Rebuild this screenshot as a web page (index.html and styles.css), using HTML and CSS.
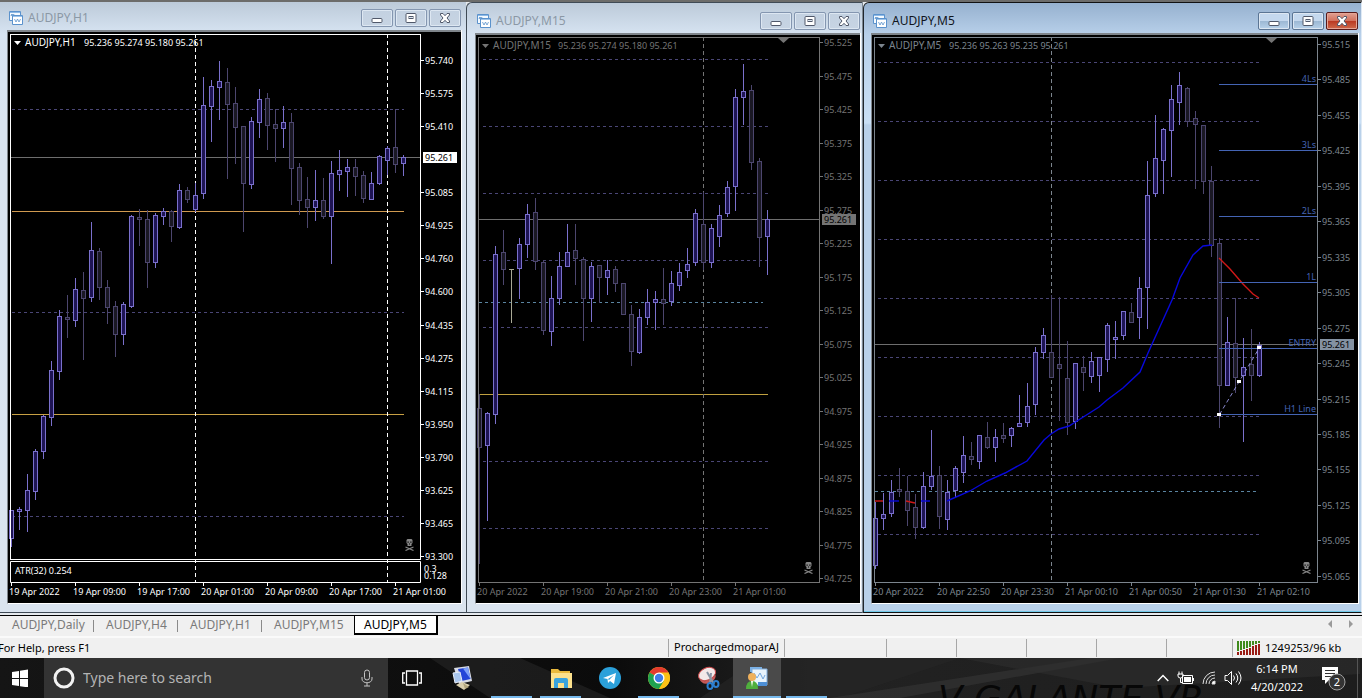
FILE: index.html
```html
<!DOCTYPE html>
<html lang="en">
<head>
<meta charset="utf-8">
<title>AUDJPY charts</title>
<link rel="stylesheet" href="styles.css">
</head>
<body>
<svg class="defs" width="0" height="0" aria-hidden="true">
  <symbol id="ico-chart" viewBox="0 0 14 14">
    <path d="M.5 .5h11v9H.5z" fill="#f4faff" stroke="#5b92cc"/>
    <path d="M1 1.500h10" stroke="#8db9e6"/>
    <path d="M2 5l1-2 1 2 1-2" fill="none" stroke="#5b92cc"/>
    <path d="M3.500 4.500h10v9h-10z" fill="#fff" stroke="#5b92cc"/>
    <path d="M4 5.500h9" stroke="#9cc3ea"/>
    <path d="M5.500 8l1.500 3L8.500 8 10 11 11.500 8" fill="none" stroke="#5b92cc" stroke-width=".8"/>
  </symbol>
  <symbol id="ico-min" viewBox="0 0 12 10"><rect x="1" y="5.500" width="10" height="4" rx="1" fill="#fff" stroke="#50586a"/></symbol>
  <symbol id="ico-max" viewBox="0 0 12 10"><rect x="1" y=".5" width="10" height="9" rx="1" fill="#fff" stroke="#50586a"/><rect x="4" y="3.500" width="4" height="2" fill="#dce6f0" stroke="#50586a"/></symbol>
  <symbol id="ico-close" viewBox="0 0 12 10"><path d="M1.500 .500h2.500l2 2.200 2-2.200h2.500v1.500L8 5l2.500 3v1.500H8L6 7.300 4 9.500H1.500V8L4 5 1.500 2z" fill="#fff" stroke="#50586a"/></symbol>
  <symbol id="ico-skull" viewBox="0 0 9 12"><path d="M2.500 0h4l1 1v3l-1 1v2h-4v-2l-1-1v-3z" fill="#868686"/><path d="M2.500 2.500h1.200v1.200H2.500zM5.300 2.500h1.200v1.200H5.300zM4 4.500h1v1H4z" fill="#000"/><path d="M.5 8l8 3.500M8.500 8l-8 3.500" stroke="#868686" stroke-width="1.200"/></symbol>
</svg>

<main class="workspace">
  <section class="window window-flat" aria-label="AUDJPY,H1">
    <header class="titlebar">
      <svg class="title-icon"><use href="#ico-chart"/></svg><h2>AUDJPY,H1</h2>
      <button aria-label="Minimize"><svg><use href="#ico-min"/></svg></button>
      <button aria-label="Maximize"><svg><use href="#ico-max"/></svg></button>
      <button aria-label="Close"><svg><use href="#ico-close"/></svg></button>
    </header>
    <svg class="chart" id="chart-h1" viewBox="8 32 453 571" preserveAspectRatio="xMinYMin meet"></svg>
  </section>
  <section class="window" aria-label="AUDJPY,M15">
    <header class="titlebar">
      <svg class="title-icon"><use href="#ico-chart"/></svg><h2>AUDJPY,M15</h2>
      <button aria-label="Minimize"><svg><use href="#ico-min"/></svg></button>
      <button aria-label="Maximize"><svg><use href="#ico-max"/></svg></button>
      <button aria-label="Close"><svg><use href="#ico-close"/></svg></button>
    </header>
    <svg class="chart" id="chart-m15" viewBox="476 35 384 568" preserveAspectRatio="xMinYMin meet"></svg>
  </section>
  <section class="window window-active" aria-label="AUDJPY,M5">
    <header class="titlebar">
      <svg class="title-icon"><use href="#ico-chart"/></svg><h2>AUDJPY,M5</h2>
      <button aria-label="Minimize"><svg><use href="#ico-min"/></svg></button>
      <button aria-label="Maximize"><svg><use href="#ico-max"/></svg></button>
      <button class="close" aria-label="Close"><svg><use href="#ico-close"/></svg></button>
    </header>
    <svg class="chart" id="chart-m5" viewBox="872 35 486 568" preserveAspectRatio="xMinYMin meet"></svg>
  </section>
</main>

<nav class="tabs">
  <button>AUDJPY,Daily</button>
  <button>AUDJPY,H4</button>
  <button>AUDJPY,H1</button>
  <button class="wide">AUDJPY,M15</button>
  <button class="active">AUDJPY,M5</button>
  <span class="tab-scroll">
    <svg width="28" height="8" viewBox="0 0 28 8"><path d="M5 0v8L1 4zM22 0v8l4-4z" fill="#9a9a9a"/></svg>
  </span>
</nav>

<footer class="status">
  <span class="help">For Help, press F1</span>
  <span class="cell profile">ProchargedmoparAJ</span>
  <span class="cell c102"></span>
  <span class="cell c70"></span>
  <span class="cell c70"></span>
  <span class="cell c70"></span>
  <span class="cell c70"></span>
  <span class="cell c66"></span>
  <span class="cell traffic">
    <svg width="24" height="14" viewBox="0 0 24 14">
      <path d="M1 0v10M4 0v9M7 0v8M10 0v7M13 0v6M16 0v4M19 0v3M22 0v2" stroke="#3f8a1c" stroke-width="2"/>
      <path d="M1 11v3M4 10v4M7 9v5M10 8v6M13 7v7M16 5v9M19 4v10M22 3v11" stroke="#9a1c14" stroke-width="2"/>
    </svg>
    1249253/96 kb
  </span>
</footer>

<footer class="taskbar">
  <svg class="wallpaper" viewBox="0 0 1362 40" preserveAspectRatio="xMaxYMid slice" aria-hidden="true">
    <path d="M430 0h90l90 40h-120zM760 0h200l-120 40H700z" fill="#262626" opacity=".6"/>
    <path d="M830 40l260-40h30L900 40z" fill="#333" opacity=".7"/>
    <path d="M960 0l160 30 240-14V0z" fill="#2e2e2e" opacity=".6"/>
    <text x="938" y="53" class="wall-text">V GALANTE VR</text>
  </svg>
  <button class="start" aria-label="Start">
    <svg width="16" height="18" viewBox="0 0 16 18"><path d="M0 3l7-1v7H0zM8 1.800L16 .6V9H8zM0 10h7v7l-7-1zM8 10h8v8.400l-8-1.200z" fill="#fff"/></svg>
  </button>
  <label class="search">
    <svg width="22" height="22" viewBox="0 0 22 22"><circle cx="11" cy="11" r="9" fill="none" stroke="#f2f2f2" stroke-width="3"/></svg>
    <input type="text" placeholder="Type here to search" aria-label="Search">
    <svg width="12" height="18" viewBox="0 0 12 18"><rect x="3.500" y="1" width="5" height="10" rx="2.500" fill="none" stroke="#c4c4c4"/><path d="M1 8v2c0 5 10 5 10 0V8M6 14v3M3 17h6" fill="none" stroke="#c4c4c4"/></svg>
  </label>
  <button class="task narrow" aria-label="Task View">
    <svg width="20" height="16" viewBox="0 0 20 16"><path d="M4.500 1h11v14h-11zM3 3H.700v10H3M17 3h2.300v10H17" fill="none" stroke="#fff" stroke-width="1.300"/></svg>
  </button>
  <button class="task" aria-label="Remote session">
    <svg width="24" height="26" viewBox="0 0 24 26"><path d="M3 3l15-2 3 15-13 3z" fill="#d8dce6"/><path d="M7 4l10-1.500 2.500 11.500-9 2z" fill="#2445d8"/><path d="M12 3.500l5-1L19.500 14z" fill="#7da0f8"/><path d="M2 8l7-1 2 9-7 2z" fill="#a9c6ee" stroke="#e8eef8"/><path d="M5 20l6-3 8 3-6 5z" fill="#d9cfae"/><path d="M12 18l2 6 4-2z" fill="#b1a57d"/></svg>
  </button>
  <button class="task running" aria-label="Application"></button>
  <button class="task running" aria-label="File Explorer">
    <svg width="22" height="22" viewBox="0 0 22 22"><path d="M1 2h7l2 2h10v17H1z" fill="#e9b93d"/><path d="M1 6h21v15H1z" fill="#fbe08c"/><path d="M4 21v-8q0-2 2-2h10q2 0 2 2v8h-4v-5H8v5z" fill="#39a3de"/></svg>
  </button>
  <button class="task" aria-label="Telegram">
    <svg width="22" height="22" viewBox="0 0 22 22"><circle cx="11" cy="11" r="11" fill="#2ba0da"/><path d="M4 11l13-5-2 11-4-3-2 2-.5-4zM9 12l6-4-5 5z" fill="#fff" fill-rule="evenodd"/></svg>
  </button>
  <button class="task running" aria-label="Chrome">
    <svg width="22" height="22" viewBox="0 0 22 22"><circle cx="11" cy="11" r="11" fill="#fbc116"/><path d="M11 11L1.500 5.500A11 11 0 0 1 20.500 5.500z" fill="#e33b2e"/><path d="M11 11L1.500 5.500A11 11 0 0 0 11 22l5-8z" fill="#1fa150"/><path d="M11 5.500h9.500A11 11 0 0 1 11 22l5-8z" fill="#fbc116"/><circle cx="11" cy="11" r="5.500" fill="#fff"/><circle cx="11" cy="11" r="4.200" fill="#3f7de8"/></svg>
  </button>
  <button class="task" aria-label="Snipping Tool">
    <svg width="24" height="26" viewBox="0 0 24 26"><ellipse cx="11" cy="9" rx="9" ry="6" transform="rotate(-25 11 9)" fill="#f3e9e9" stroke="#c8494a"/><path d="M3 13q4 5 10 2l7-5q-1 6-6 8-8 3-11-5z" fill="#c65a58"/><path d="M11 7l7 12M15 8l-1 10" stroke="#8794a4" stroke-width="2"/><ellipse cx="14" cy="21" rx="2.500" ry="3" fill="none" stroke="#2c7fd0" stroke-width="2"/><ellipse cx="20" cy="19" rx="2.500" ry="3" fill="none" stroke="#2c7fd0" stroke-width="2"/></svg>
  </button>
  <button class="task running current" aria-label="MetaTrader">
    <svg width="22" height="24" viewBox="0 0 22 24"><path d="M4 1h12v5H4z" fill="#79b0e6"/><path d="M6 3h15v16H6z" fill="#e9f4fd" stroke="#80aede"/><path d="M8 7l3 5 3-5 3 6 2-4" fill="none" stroke="#74a7de"/><path d="M12 16h9v4h-9z" fill="#4d8fd6"/><circle cx="6" cy="11" r="4" fill="#efb15c"/><path d="M0 23q0-8 6-8t6 8z" fill="#4fae3d"/><path d="M5 15h2l-1 6z" fill="#fff"/></svg>
  </button>
  <button class="task running" aria-label="Application"></button>
  <div class="tray">
    <svg width="12" height="8" viewBox="0 0 12 8"><path d="M.7 7L6 1.500 11.300 7" fill="none" stroke="#fff" stroke-width="1.400"/></svg>
    <svg width="17" height="14" viewBox="0 0 17 14"><path d="M5.500 4.500h10v8h-10z" fill="none" stroke="#fff"/><path d="M7 6h7v5H7zM16 7h1v3h-1z" fill="#fff"/><path d="M1 3h5v2q0 2-2.500 2T1 5zM2 .500v3M5 .500v3M3.500 7v4.500h2" fill="none" stroke="#fff"/></svg>
    <svg width="14" height="14" viewBox="0 0 14 14" fill="none" stroke="#dedede"><path d="M1 13A12 12 0 0 1 13 1M4 13a9 9 0 0 1 9-9M7 13a6 6 0 0 1 6-6" /><path d="M10 13q0-3 3-3v3z" fill="#fff"/></svg>
    <svg width="18" height="16" viewBox="0 0 18 16" fill="none" stroke="#fff"><path d="M1 5.500h2.500l4-4v13l-4-4H1zM9.500 5.500q2 2.500 0 5M12 3.500q3.500 4.500 0 9M14.500 1.500q5 6.500 0 13"/></svg>
  </div>
  <div class="clock"><time>6:14 PM</time><time>4/20/2022</time></div>
  <button class="notify" aria-label="Notifications">
    <svg width="26" height="26" viewBox="0 0 26 26"><path d="M1 2h16v13H8l-4 4v-4H1z" fill="#fff"/><path d="M4 5.500h10M4 8.500h10M4 11.500h7" stroke="#333"/><circle cx="16" cy="17" r="8" fill="#333" stroke="#a0a0a0"/><text x="16" y="21" text-anchor="middle" class="badge">2</text></svg>
  </button>
</footer>
<script src="charts.js"></script>
</body>
</html>
```
FILE: styles.css
```css
* { box-sizing: border-box; }

body {
  margin: 0;
  height: 100vh;
  display: flex;
  flex-direction: column;
  overflow: hidden;
  background: #f0f0f0;
  font-family: "Noto Sans", "Open Sans", sans-serif;
}

h2 { margin: 0; font-size: 12px; font-weight: 400; line-height: 16px; }

button {
  margin: 0;
  padding: 0;
  border: 0;
  background: none;
  font: inherit;
  color: inherit;
}

svg { display: block; }
.defs { position: absolute; }

/* Chart windows */
.workspace {
  flex: 1;
  min-height: 0;
  display: grid;
  grid-template-columns: 466fr 397fr 499fr;
  grid-template-rows: minmax(0, 1fr);
  padding-bottom: 2px;
  border-top: 2px solid #6c6c6a;
  background: #e6eaee;
}

.window {
  display: flex;
  flex-direction: column;
  min-width: 0;
  padding: 0 2px 8px 8px;
  border: 1px solid #3f4a55;
  border-right-color: #7d8893;
  border-top-left-radius: 6px;
  background: linear-gradient(#bccad9, #d7e4f2 32px, #d9e4f0 120px, #dae4ef);
  color: #8b98a5;
}

.window-flat {
  padding: 0 5px 8px 7px;
  border-width: 0 0 1px;
  border-radius: 0;
}

.window-active {
  padding: 0 3px 8px 7px;
  border-color: #111 #dfeaf5 #111 #20262c;
  background: linear-gradient(#96b1cf, #b8d0ea 32px, #c9dff5 120px, #b9d1ea 122px);
  box-shadow: inset 0 -1px #6fc8e8;
  color: #10151c;
}

.titlebar {
  flex: none;
  display: flex;
  align-items: center;
  gap: 2px;
  height: 30px;
  padding-top: 6px;
}

.window-flat .titlebar { height: 28px; padding-top: 4px; }
.title-icon { width: 14px; height: 14px; margin: 0 3px 0 2px; }
.titlebar h2 { flex: 1; }

.titlebar button {
  display: grid;
  place-items: center;
  width: 32px;
  height: 18px;
  border: 1px solid #8496b0;
  border-radius: 2px;
  box-shadow: inset 0 0 0 1px #dde7f2;
  background: linear-gradient(#c3d1e1, #c7d4e3);
}

.titlebar button svg { width: 12px; height: 10px; }

.window-active .titlebar button {
  border-color: #5b7594;
  background: linear-gradient(#c4d8ee 50%, #9bb7d3 50%, #b8d2ea);
}

.window-active .titlebar .close {
  border-color: #57191a;
  box-shadow: inset 0 0 0 1px #e5a596;
  background: linear-gradient(#e0a093, #d2705c 50%, #b93822 50%, #cf6a4c);
}

.chart {
  flex: 1;
  min-height: 0;
  width: 100%;
  border: 1px solid #fff;
  border-width: 2px 0 1px 1px;
  border-color: #7f858b #fff #fff #7f858b;
  box-shadow: 1px 0 #fff;
  background: #000;
}

.chart text { font-size: 9px; }
.chart .chart-name { font-size: 10px; }

/* Workbook tabs */
.tabs {
  flex: none;
  display: flex;
  height: 21px;
  padding-left: 10px;
  border-top: 1px solid #000;
  font-size: 12px;
  line-height: 16px;
  color: #7a7a7a;
}

.tabs button {
  position: relative;
  width: 84px;
  height: 19px;
  padding: 0 0 2px 12px;
  text-align: left;
  white-space: nowrap;
}
.tabs button:first-child { padding-left: 2px; }
.tabs button:not(.active):not(.wide)::after {
  content: "";
  position: absolute;
  right: 0;
  top: 4px;
  height: 12px;
  border-right: 1px solid #8a8a8a;
}
.tabs .wide { width: 92px; }
.tabs .active {
  padding: 0 0 0 9px;
  border: 1px solid #000;
  border-width: 0 2px 2px 1px;
  background: #fff;
  color: #000;
}
.tab-scroll { margin: 4px 7px 0 auto; }

/* Status line */
.status {
  flex: none;
  display: flex;
  align-items: center;
  height: 22px;
  border-top: 2px solid #fafafa;
  font-size: 11px;
  line-height: 16px;
  color: #000;
}

.help { flex: 1; margin-left: -2px; }
.cell { height: 18px; border-left: 1px solid #a6a6a6; overflow: hidden; }
.profile { width: 116px; padding-left: 5px; }
.c102 { width: 102px; }
.c70 { width: 70px; }
.c66 { width: 66px; }
.traffic { display: flex; align-items: center; gap: 4px; width: 130px; padding-left: 4px; white-space: nowrap; }

/* Taskbar */
.taskbar {
  flex: none;
  position: relative;
  display: flex;
  height: 40px;
  background: linear-gradient(90deg, #151515, #0b0b0b 45%, #222 60%, #1d1d1d);
  color: #fff;
}

.taskbar > * { position: relative; }
.taskbar > .wallpaper { position: absolute; inset: 0; width: 100%; height: 100%; }
.wall-text { font: italic 36px "DejaVu Sans", sans-serif; fill: #070707; }

.start { width: 44px; display: grid; place-items: center; padding-right: 4px; }

.search {
  display: flex;
  align-items: center;
  gap: 8px;
  width: 344px;
  padding: 0 15px 0 9px;
  background: #333;
}

.search input {
  flex: 1;
  min-width: 0;
  padding: 0;
  border: 0;
  outline: 0;
  background: none;
  color: #fff;
  font: 14px/20px "Noto Sans", sans-serif;
}
.search input::placeholder { color: #b4b4b4; opacity: 1; }

.task {
  display: grid;
  place-items: center;
  width: 41px;
  margin: 0 4px;
}
.task.narrow { width: 48px; margin: 0 2px 0 0; }
.task.running { border-bottom: 2px solid #76b9ed; padding-top: 2px; }
.task.current { width: 48px; margin: 0 1px; background: #4a4a4a; }

.tray { display: flex; align-items: center; gap: 8px; margin-left: auto; }
.clock {
  display: flex;
  flex-direction: column;
  align-items: center;
  width: 70px;
  padding-top: 2px;
  font-size: 11px;
  line-height: 18px;
}
.notify { width: 46px; padding-left: 9px; border-right: 1px solid #555; margin-right: 4px; }
.badge { font: 11px "Noto Sans", sans-serif; fill: #fff; }
```
FILE: charts.js
```js
const NS = "http://www.w3.org/2000/svg";

function add(parent, name, attrs, text) {
  const node = document.createElementNS(NS, name);
  for (const key in attrs) node.setAttribute(key, attrs[key]);
  if (text) node.textContent = text;
  parent.appendChild(node);
  return node;
}

// One-pixel horizontal and vertical rules are centred on the pixel they cover
function line(s, x1, y1, x2, y2, stroke, dash) {
  const dx = y1 === y2 ? 0 : 0.5;
  const dy = x1 === x2 ? 0 : 0.5;
  return add(s, "path", {
    d: `M${x1 + dx} ${y1 + dy}L${x2 + dx} ${y2 + dy}`, stroke, fill: "none",
    ...(dash ? { "stroke-dasharray": dash } : {})
  });
}

const label = (s, x, y, text, fill, anchor = "start") =>
  add(s, "text", { x, y, fill, "text-anchor": anchor }, text);

// Each candle: kind (u = rising, d = falling, t = flat), high, body top, body bottom, low
function candles(s, startX, data) {
  data.trim().split(/\s*;\s*/).forEach((row, i) => {
    const [kind, ...v] = row.split(" ");
    const [high, top, bottom, low] = v.map(Number);
    const x = startX + i * 8;
    if (kind === "t") {
      line(s, x, high, x, low, "#a9a996");
      line(s, x - 2, top, x + 3, top, "#a9a996");
      return;
    }
    const stroke = kind === "u" ? "#7a70cc" : "#4c466e";
    const fill = kind === "u" ? "#1e1454" : "#1a1824";
    line(s, x, high, x, low + 1, stroke);
    add(s, "rect", {
      x: x - 1.5, y: top + 0.5, width: 4, height: Math.max(1, bottom - top), fill, stroke
    });
  });
}

function drawChart(c) {
  const s = document.getElementById(c.id);
  const { left, top, right, bottom, ink } = c;
  c.dashed.forEach(y => line(s, c.dashX, y, c.endX, y, "#4a4676", "3 3"));
  if (c.teal) line(s, left + 1, c.teal, c.endX - 5, c.teal, "#5a84a0", "3 3");
  c.solid.forEach(([y, color]) => line(s, left + 2, y, c.endX, y, color));
  line(s, left, c.current, right, c.current, "#6e6e6e");
  c.vertical.forEach(x => line(s, x, top, x, 582, ink, "4 3"));
  candles(s, c.startX, c.data);
  add(s, "rect", { x: left + 0.5, y: top + 0.5, width: right - left, height: bottom - top, fill: "none", stroke: ink });
  add(s, "path", { d: `M${left + 4} ${top + 7}h7l-3.500 4z`, fill: ink });
  label(s, left + 15, top + 12, c.title, ink).setAttribute("class", "chart-name");
  label(s, c.quoteX, top + 12, c.quote, ink);
  c.prices.forEach((p, i) => {
    const y = Math.round(c.priceY + i * c.priceStep);
    if (!p) return;
    line(s, right, y, right + 4, y, ink);
    label(s, right + 5, y + 4, p, ink);
  });
  add(s, "rect", { x: right + 3, y: c.current - 5, width: 34, height: 11, fill: c.tagFill });
  label(s, right + 5, c.current + 4, "95.261", "#000");
  c.times.forEach((t, i) => {
    const x = c.startX + i * 64;
    line(s, x, 582, x, 586, ink);
    label(s, x - 2, 595, t, ink);
  });
  add(s, "use", { href: "#ico-skull", x: right - 15, y: bottom - 20, width: 9, height: 12 });
  return s;
}

const h1 = drawChart({
  id: "chart-h1", left: 10, top: 34, right: 420, bottom: 559, ink: "#fff", tagFill: "#fff",
  title: "AUDJPY,H1", quote: "95.236 95.274 95.180 95.261", quoteX: 84,
  dashX: 12, endX: 404, startX: 11, current: 157, dashed: [109, 312, 516],
  solid: [[211, "#d09a50"], [414, "#c8a044"]], vertical: [195, 387],
  priceY: 60, priceStep: 33.07,
  prices: ["95.740", "95.575", "95.410", "", "95.085", "94.925", "94.760", "94.600", "94.435", "94.275", "94.115", "93.950", "93.790", "93.625", "93.465", "93.300"],
  times: ["19 Apr 2022", "19 Apr 09:00", "19 Apr 17:00", "20 Apr 01:00", "20 Apr 09:00", "20 Apr 17:00", "21 Apr 01:00"],
  data: `u 510 510 538 546;u 507 509 511 529;u 474 490 510 531;u 449 451 491 499;u 415 416 451 458;u 361 370 417 425;u 310 316 371 379;
    d 295 317 319 337;u 278 289 320 326;d 272 290 298 359;u 222 250 297 301;d 248 251 287 299;d 280 287 307 323;d 301 306 334 356;
    u 302 304 334 344;u 215 216 306 307;d 209 217 219 245;d 210 219 262 287;u 213 215 262 267;u 208 211 216 224;d 210 211 226 241;
    u 184 190 227 228;d 187 190 199 202;u 183 195 209 211;u 77 105 193 198;u 80 86 106 141;u 61 81 87 119;d 68 82 104 178;
    d 87 103 127 163;d 126 126 183 231;u 117 121 184 188;u 89 99 122 137;d 93 98 125 149;d 109 124 128 161;u 106 122 128 147;
    d 113 122 168 204;d 163 167 200 214;d 177 199 207 227;u 170 200 207 220;d 178 200 216 218;u 161 173 216 263;u 150 170 174 190;
    u 159 167 171 196;d 159 167 176 195;d 171 175 198 202;u 172 183 199 199;u 155 156 183 184;u 146 148 160 174;d 109 147 164 172;u 155 157 163 175`
});

// Indicator strip under the H1 chart
add(h1, "path", { d: "M10.500 561.500H420.500V582.500H10.500Z", fill: "none", stroke: "#fff" });
label(h1, 15, 574, "ATR(32) 0.254", "#fff");
label(h1, 424, 572, "0.3", "#fff");
label(h1, 424, 579, "0.128", "#fff");

const m15 = drawChart({
  id: "chart-m15", left: 478, top: 37, right: 819, bottom: 582, ink: "#747474", tagFill: "#747474",
  title: "AUDJPY,M15", quote: "95.236 95.274 95.180 95.261", quoteX: 558,
  dashX: 483, endX: 768, startX: 479, current: 219, dashed: [59, 126, 193, 260, 327, 461, 528], teal: 302,
  solid: [[394, "#c0a040"]], vertical: [703],
  priceY: 42, priceStep: 33.5,
  prices: ["95.525", "95.475", "95.425", "95.375", "95.325", "95.275", "95.225", "95.175", "95.125", "95.075", "95.025", "94.975", "94.925", "94.875", "94.825", "94.775", "94.725"],
  times: ["20 Apr 2022", "20 Apr 19:00", "20 Apr 21:00", "20 Apr 23:00", "21 Apr 01:00"],
  data: `d 394 408 447 563;u 412 413 445 520;u 246 254 414 423;d 230 252 269 284;t 269 269 269 323;u 238 244 268 298;u 204 214 244 257;
    d 198 212 261 269;d 260 262 330 334;u 276 298 331 345;u 252 266 298 304;u 224 252 266 266;d 224 250 258 284;d 257 259 298 340;
    u 262 266 298 321;d 265 265 277 302;u 260 270 277 294;d 266 269 283 291;d 283 283 314 314;d 305 314 351 365;u 309 317 352 353;
    u 289 302 317 324;u 291 299 302 329;d 268 299 303 324;u 271 283 301 305;u 263 272 285 290;u 248 264 270 277;u 209 213 262 265;
    d 192 224 262 269;u 224 228 262 267;u 205 215 236 246;u 181 187 213 216;u 89 97 186 210;u 64 91 97 124;d 85 90 162 169;
    d 158 161 237 266;u 210 219 236 274`
});
add(m15, "path", { d: "M778 38h11l-5.500 5z", fill: "#747474" });

const m5 = drawChart({
  id: "chart-m5", left: 874, top: 37, right: 1317, bottom: 582, ink: "#7c858e", tagFill: "#8492a2",
  title: "AUDJPY,M5", quote: "95.236 95.263 95.235 95.261", quoteX: 949,
  dashX: 878, endX: 1261, startX: 875, current: 344, dashed: [62, 121, 180, 239, 298, 357, 416, 475, 534], teal: 491,
  solid: [], vertical: [1051],
  priceY: 44, priceStep: 35.45,
  prices: ["95.515", "95.485", "95.455", "95.425", "95.395", "95.365", "95.335", "95.305", "95.275", "95.245", "95.215", "95.185", "95.155", "95.125", "95.095", "95.065"],
  times: ["20 Apr 2022", "20 Apr 22:50", "20 Apr 23:30", "21 Apr 00:10", "21 Apr 00:50", "21 Apr 01:30", "21 Apr 02:10"],
  data: `u 502 518 565 568;u 493 514 518 529;u 480 492 513 516;d 468 489 491 496;d 476 491 510 525;d 494 507 527 538;u 472 486 527 528;
    u 430 476 486 489;d 466 475 516 528;u 480 492 519 529;u 466 468 490 496;u 436 455 472 482;d 442 456 459 464;u 435 435 461 468;
    d 422 437 447 448;u 429 437 447 461;d 423 435 438 442;u 427 428 435 446;u 395 423 426 426;u 383 406 422 426;u 347 352 404 414;
    u 328 335 352 358;d 295 352 377 377;d 297 364 368 420;d 341 378 422 434;u 363 363 421 428;d 356 367 372 390;u 352 361 376 382;
    u 357 357 375 391;u 323 325 359 371;u 321 337 339 358;u 311 311 335 339;d 303 312 322 322;u 277 288 317 338;u 161 195 287 328;
    u 115 158 193 196;u 128 129 160 193;u 85 99 130 176;u 72 85 102 124;d 87 88 121 126;d 111 118 124 188;d 125 125 181 193;
    d 166 181 245 256;d 238 243 385 427;u 317 342 385 385;d 298 343 377 392;u 338 367 375 441;d 329 364 375 400;u 342 345 375 376`
});
add(m5, "path", { d: "M1266 38h11l-5.500 5z", fill: "#747474" });

// Moving average, coloured by direction
const curve = (points, stroke) => add(m5, "polyline", { points, stroke, fill: "none", "stroke-width": 1.4 });
curve("947,501 970,491 987,481 1005,473 1027,461 1044,440 1051,434 1059,429 1069,426 1077,421 1099,407 1107,400 1123,388 1140,372 1148,353 1172,300 1180,278 1193,255 1203,246 1212,245", "#0808dc");
curve("1219,258 1230,269 1243,284 1253,294 1259,298", "#d01818");
curve("875,501 883,501", "#d01818");
curve("889,501 899,501", "#0808dc");
curve("906,501 915,503", "#d01818");
curve("921,501 930,501", "#0808dc");

[[84, "4Ls"], [150, "3Ls"], [216, "2Ls"], [282, "1L"], [348, "ENTRY"], [414, "H1 Line"]].forEach(([y, name]) => {
  line(m5, 1219, y, 1317, y, "#4464b4");
  label(m5, 1316, y - 2, name, "#4464b4", "end");
});

line(m5, 1219, 414, 1259, 347, "#8a8ad0", "4 3");
[[1219, 414], [1239, 381], [1259, 347]].forEach(([x, y]) =>
  add(m5, "rect", { x: x - 2, y: y - 1, width: 4, height: 3, fill: "#fff" }));
```
